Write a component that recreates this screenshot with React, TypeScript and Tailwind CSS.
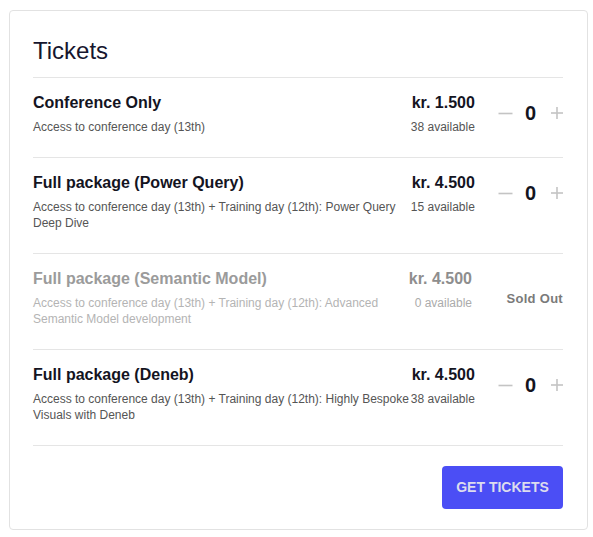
import React from "react";

type Ticket = {
  title: string;
  desc: string;
  price: string;
  available: string;
  soldOut?: boolean;
};

const tickets: Ticket[] = [
  {
    title: "Conference Only",
    desc: "Access to conference day (13th)",
    price: "kr. 1.500",
    available: "38 available",
  },
  {
    title: "Full package (Power Query)",
    desc: "Access to conference day (13th) + Training day (12th): Power Query Deep Dive",
    price: "kr. 4.500",
    available: "15 available",
  },
  {
    title: "Full package (Semantic Model)",
    desc: "Access to conference day (13th) + Training day (12th): Advanced Semantic Model development",
    price: "kr. 4.500",
    available: "0 available",
    soldOut: true,
  },
  {
    title: "Full package (Deneb)",
    desc: "Access to conference day (13th) + Training day (12th): Highly Bespoke Visuals with Deneb",
    price: "kr. 4.500",
    available: "38 available",
  },
];

function Minus() {
  return (
    <svg width="15" height="12" viewBox="0 0 15 12" className="block">
      <line x1="0.5" y1="6.5" x2="14.5" y2="6.5" stroke="#c4c4c4" strokeWidth="1.6" />
    </svg>
  );
}

function Plus() {
  return (
    <svg width="12" height="12" viewBox="0 0 12 12" className="block">
      <line x1="0" y1="6" x2="12" y2="6" stroke="#c4c4c4" strokeWidth="1.6" />
      <line x1="6" y1="0" x2="6" y2="12" stroke="#c4c4c4" strokeWidth="1.6" />
    </svg>
  );
}

function Row({ t }: { t: Ticket }) {
  const dis = !!t.soldOut;
  return (
    <div className="flex border-b border-[#e5e5e5] pt-[13px] pb-[22px]">
      <div className="flex-1 min-w-0">
        <div
          className={`text-[16px] leading-6 font-bold ${dis ? "text-[#9b9b9b]" : "text-[#14141f]"}`}
        >
          {t.title}
        </div>
        <div
          className={`mt-1 text-[12px] leading-4 ${dis ? "text-[#b4b4b4]" : "text-[#555555]"}`}
        >
          {t.desc}
        </div>
      </div>
      {dis ? (
        <div className="flex">
          <div className="text-right">
            <div className="text-[16px] leading-6 font-bold text-[#8e8e8e]">{t.price}</div>
            <div className="mt-1 text-[12px] leading-4 text-[#ababab]">{t.available}</div>
          </div>
          <div className="w-[91px] flex items-center justify-end self-center mt-[4px]">
            <span className="text-[13px] font-bold text-[#7a7a7a] tracking-[0.3px]">Sold Out</span>
          </div>
        </div>
      ) : (
        <div className="flex items-center self-start">
          <div className="text-right">
            <div className="text-[16px] leading-6 font-bold text-[#14141f]">{t.price}</div>
            <div className="mt-1 text-[12px] leading-4 text-[#555555]">{t.available}</div>
          </div>
          <div className="ml-[23px]">
            <Minus />
          </div>
          <div className="ml-[12px] text-[20px] leading-6 font-bold text-[#14141f]">0</div>
          <div className="ml-[15px]">
            <Plus />
          </div>
        </div>
      )}
    </div>
  );
}

export default function App() {
  return (
    <div
      className="bg-white min-h-[537px] pt-[10px] pl-[9px]"
      style={{ fontFamily: '"Liberation Sans", Arial, sans-serif' }}
    >
      <div className="w-[579px] border border-[#e2e2e2] rounded-[4px] pl-[23px] pr-[24px] pt-[24px] pb-[20px] bg-white">
        <div className="text-[24px] leading-8 text-[#16162e] border-b border-[#e5e5e5] pb-[10px]">
          Tickets
        </div>
        {tickets.map((t) => (
          <Row key={t.title} t={t} />
        ))}
        <div className="flex justify-end pt-[20px]">
          <button className="h-[43px] w-[121px] rounded-[4px] bg-[#4b4ef5] text-[14px] font-bold text-[#dcdcee] flex items-center justify-center">
            GET TICKETS
          </button>
        </div>
      </div>
    </div>
  );
}
